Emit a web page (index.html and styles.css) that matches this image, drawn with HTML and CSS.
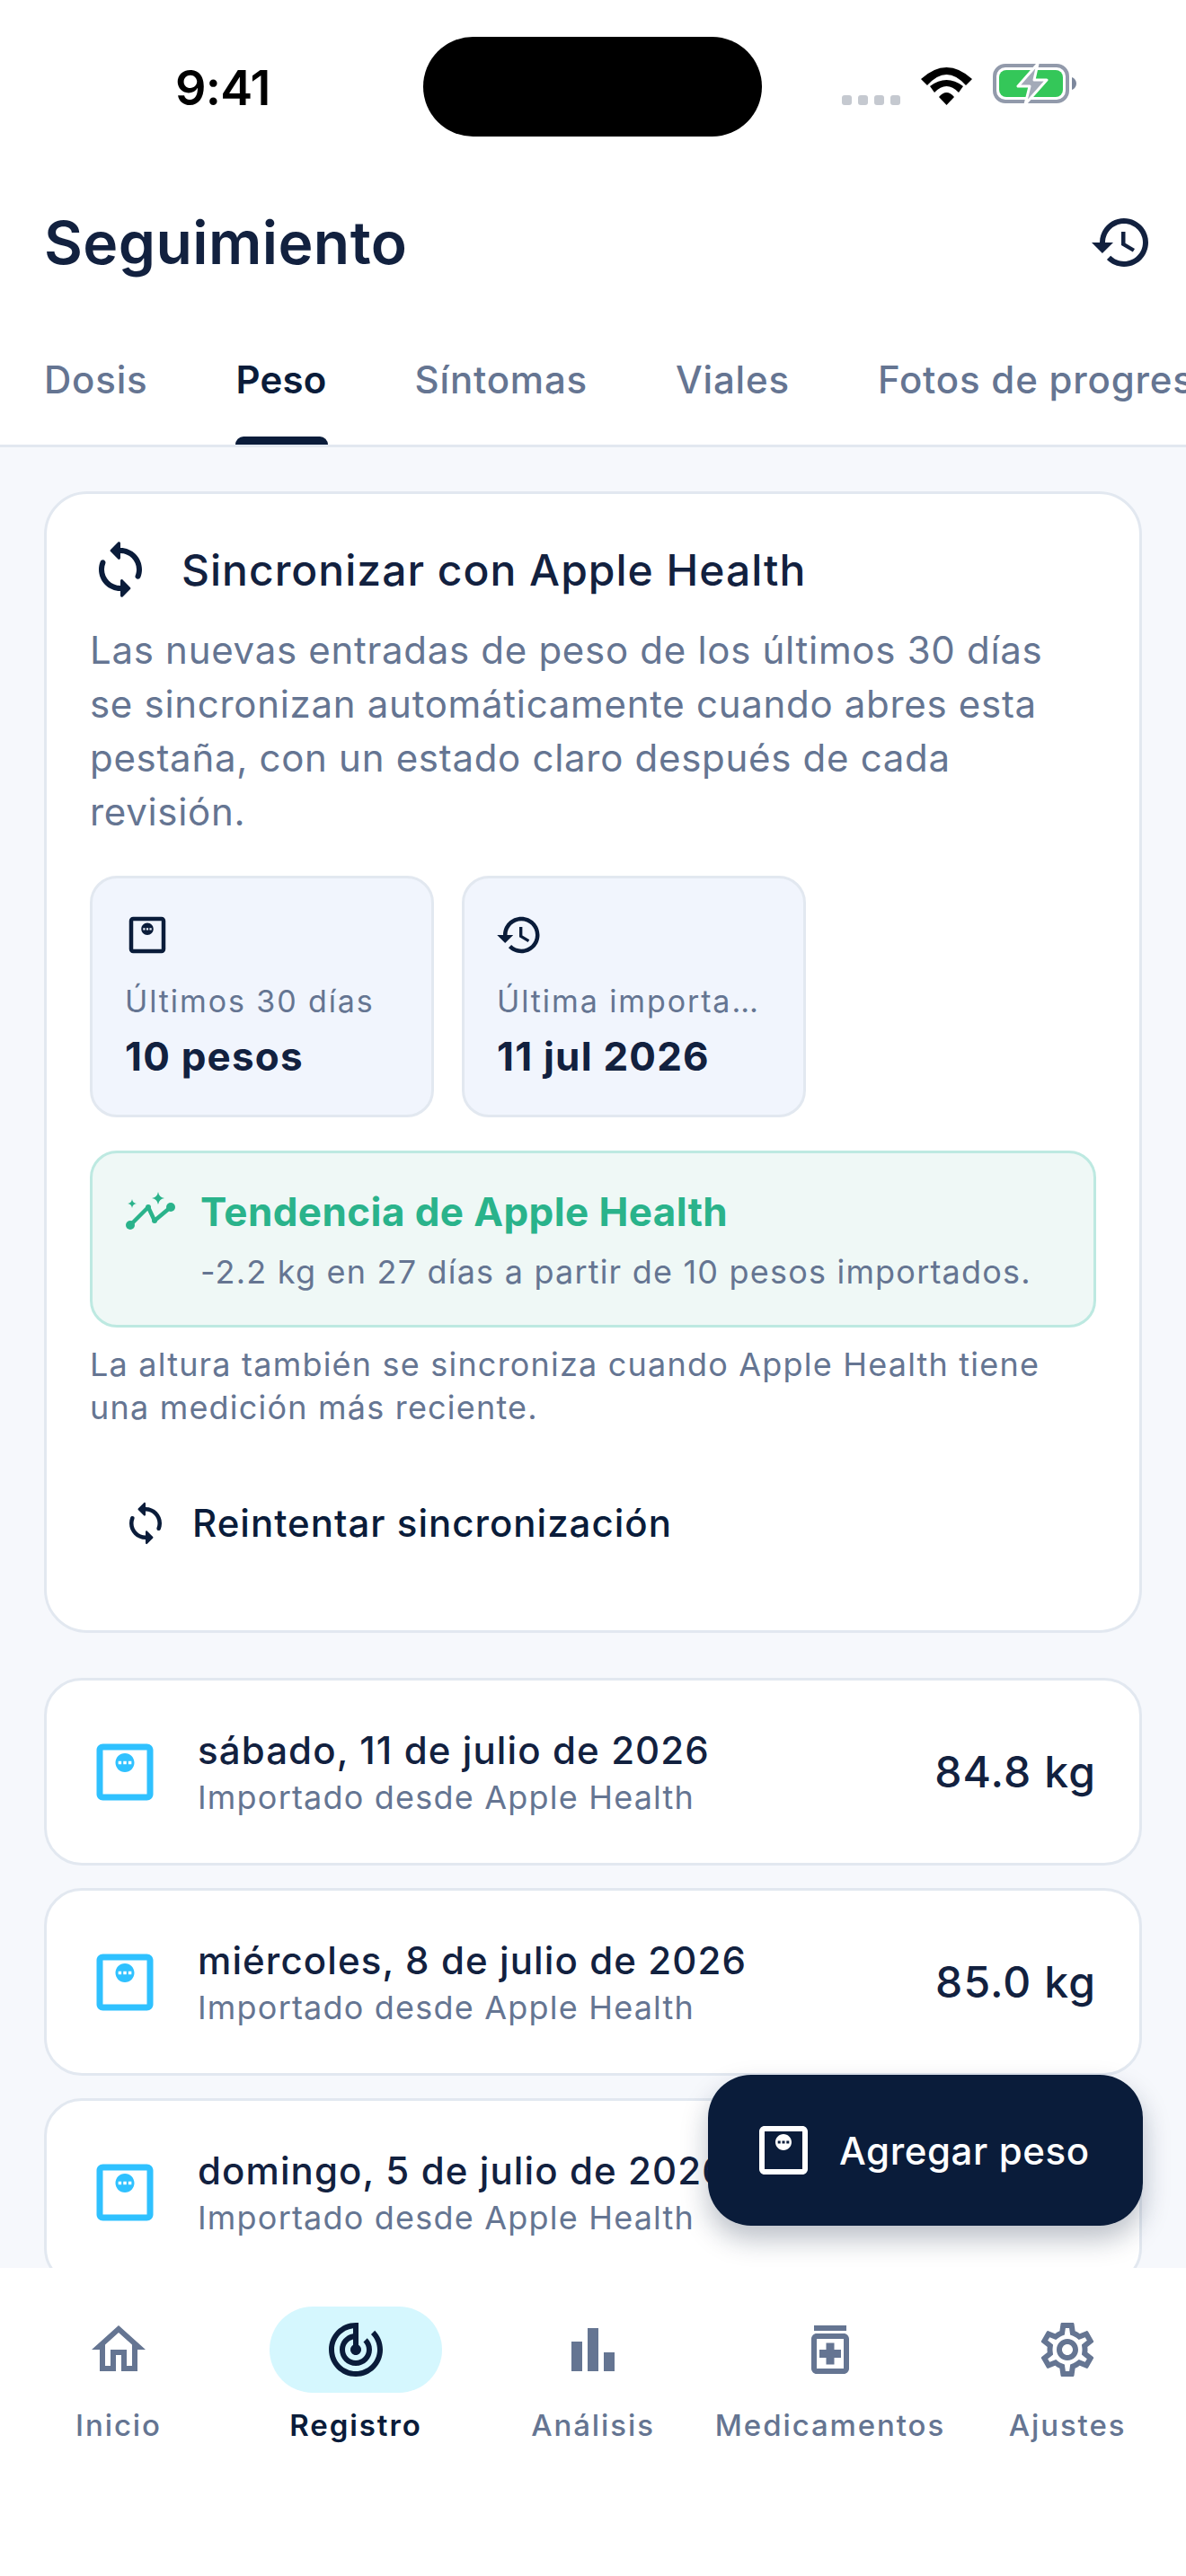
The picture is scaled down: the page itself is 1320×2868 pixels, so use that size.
FILE: index.html
```html
<!DOCTYPE html>
<html lang="es">
<head>
    <meta charset="UTF-8">
    <meta name="viewport" content="width=device-width, initial-scale=1.0">
    <title>Seguimiento</title>
    <link rel="stylesheet" href="styles.css">
</head>
<body>
    <svg class="defs" width="0" height="0">
        <symbol id="i-history" viewBox="0 0 24 24"><path d="M13 3c-4.97 0-9 4.03-9 9H1l3.89 3.89.07.14L9 12H6c0-3.87 3.13-7 7-7s7 3.13 7 7-3.13 7-7 7c-1.93 0-3.68-.79-4.94-2.06l-1.42 1.42C8.27 19.99 10.51 21 13 21c4.97 0 9-4.03 9-9s-4.03-9-9-9zm-1 5v5l4.28 2.54.72-1.21-3.5-2.08V8H12z"/></symbol>
        <symbol id="i-sync" viewBox="0 0 24 24"><path d="M12 4V2.21c0-.45-.54-.67-.85-.35l-2.8 2.79c-.2.2-.2.51 0 .71l2.79 2.79c.32.31.86.09.86-.36V6c3.31 0 6 2.69 6 6 0 .79-.15 1.56-.44 2.25-.15.36-.04.77.23 1.04.51.51 1.37.33 1.64-.34.37-.91.57-1.91.57-2.95 0-4.42-3.58-8-8-8zm0 14c-3.31 0-6-2.69-6-6 0-.79.15-1.56.44-2.25.15-.36.04-.77-.23-1.04-.51-.51-1.37-.33-1.64.34C4.2 9.96 4 10.96 4 12c0 4.42 3.58 8 8 8v1.79c0 .45.54.67.85.35l2.79-2.79c.2-.2.2-.51 0-.71l-2.79-2.79c-.31-.31-.85-.09-.85.36V18z"/></symbol>
        <symbol id="i-weight" viewBox="0 0 24 24"><path fill-rule="evenodd" d="M5 3h14c1.100 0 2 .9 2 2v14c0 1.100-.9 2-2 2H5c-1.100 0-2-.9-2-2V5c0-1.100.9-2 2-2zm0 2v14h14V5H5zm7 1c1.660 0 3 1.340 3 3s-1.340 3-3 3-3-1.340-3-3 1.340-3 3-3zm-2.100 2.500v1h1v-1h-1zm1.600 0v1h1v-1h-1zm1.600 0v1h1v-1h-1z"/></symbol>
    </svg>

    <div class="screen">
        <div class="status">
            <span class="time">9:41</span>
            <span class="island"></span>
            <div class="status-icons">
                <div class="signal"><i></i><i></i><i></i><i></i></div>
                <svg width="57" height="42" viewBox="0 0 57 42">
                    <path d="M0 13Q28.5-13 57 13L50 20Q28.5-4 7 20Z"/>
                    <path d="M10 21Q28.5 7 47 21L42 28Q28.5 14 15 28Z"/>
                    <path d="M20 33Q28.5 23 37 33L28.5 42Z"/>
                </svg>
                <svg width="96" height="47" viewBox="0 0 96 47">
                    <rect x="2" y="3" width="81" height="40" rx="12" fill="none" stroke="#929aab" stroke-width="4"/>
                    <rect x="7" y="8" width="71" height="30" rx="8" fill="#34c759"/>
                    <path d="M88 16c3 1 5 4 5 7s-2 6-5 7z" fill="#7c879c"/>
                    <path d="M50 1L28 26H41L36 46L60 19H46Z" fill="#a3aab8" stroke="#fff" stroke-width="3" stroke-linejoin="round"/>
                </svg>
            </div>
        </div>

        <header class="header">
            <h1>Seguimiento</h1>
            <svg class="icon-72 navy"><use href="#i-history"/></svg>
        </header>

        <nav class="tabs">
            <span class="tab">Dosis</span>
            <span class="tab active">Peso</span>
            <span class="tab">Síntomas</span>
            <span class="tab">Viales</span>
            <span class="tab">Fotos de progreso</span>
        </nav>

        <main class="content">
            <section class="card">
                <div class="card-head">
                    <svg class="icon-72 dark"><use href="#i-sync"/></svg>
                    <h2>Sincronizar con Apple Health</h2>
                </div>
                <p class="card-text">Las nuevas entradas de peso de los últimos 30 días se sincronizan automáticamente cuando abres esta pestaña, con un estado claro después de cada revisión.</p>

                <div class="stats">
                    <div class="stat">
                        <svg class="icon-54 dark"><use href="#i-weight"/></svg>
                        <div class="stat-label">Últimos 30 días</div>
                        <div class="stat-value">10 pesos</div>
                    </div>
                    <div class="stat">
                        <svg class="icon-54 dark"><use href="#i-history"/></svg>
                        <div class="stat-label">Última importación</div>
                        <div class="stat-value">11 jul 2026</div>
                    </div>
                </div>

                <div class="trend">
                    <div class="trend-head">
                        <svg width="60" height="48" viewBox="0 0 60 48">
                            <path d="M7 39L27 19L34 34L52 19" fill="none" stroke="#2ab38b" stroke-width="4.5" stroke-linejoin="round"/>
                            <circle cx="7" cy="39" r="5" fill="#2ab38b"/>
                            <circle cx="52" cy="19" r="5" fill="#2ab38b"/>
                            <circle cx="27" cy="19" r="3" fill="#2ab38b"/>
                            <circle cx="34" cy="34" r="3" fill="#2ab38b"/>
                            <path d="M38 2Q39 8 45 9Q39 10 38 16Q37 10 31 9Q37 8 38 2Z" fill="#2ab38b"/>
                            <path d="M9 10Q9.6 14.4 14 15Q9.6 15.6 9 20Q8.4 15.6 4 15Q8.4 14.4 9 10Z" fill="#2ab38b"/>
                        </svg>
                        <h3>Tendencia de Apple Health</h3>
                    </div>
                    <p class="trend-text">-2.2 kg en 27 días a partir de 10 pesos importados.</p>
                </div>

                <p class="note">La altura también se sincroniza cuando Apple Health tiene una medición más reciente.</p>

                <div class="retry">
                    <svg class="icon-54 dark"><use href="#i-sync"/></svg>
                    <span>Reintentar sincronización</span>
                </div>
            </section>

            <div class="entries">
                <div class="entry">
                    <svg class="icon-84 sky"><use href="#i-weight"/></svg>
                    <div class="entry-info">
                        <div class="entry-date">sábado, 11 de julio de 2026</div>
                        <div class="entry-source">Importado desde Apple Health</div>
                    </div>
                    <div class="entry-kg">84.8 kg</div>
                </div>
                <div class="entry">
                    <svg class="icon-84 sky"><use href="#i-weight"/></svg>
                    <div class="entry-info">
                        <div class="entry-date">miércoles, 8 de julio de 2026</div>
                        <div class="entry-source">Importado desde Apple Health</div>
                    </div>
                    <div class="entry-kg">85.0 kg</div>
                </div>
                <div class="entry">
                    <svg class="icon-84 sky"><use href="#i-weight"/></svg>
                    <div class="entry-info">
                        <div class="entry-date">domingo, 5 de julio de 2026</div>
                        <div class="entry-source">Importado desde Apple Health</div>
                    </div>
                </div>
            </div>
        </main>

        <button class="fab">
            <svg class="icon-72"><use href="#i-weight"/></svg>
            <span>Agregar peso</span>
        </button>

        <nav class="bottom-nav">
            <div class="nav-item">
                <div class="nav-icon">
                    <svg class="icon-72" viewBox="0 0 24 24"><path d="M12 5.69l5 4.5V18h-2v-6H9v6H7v-7.81l5-4.5M12 3L2 12h3v8h6v-6h2v6h6v-8h3L12 3z"/></svg>
                </div>
                <span>Inicio</span>
            </div>
            <div class="nav-item active">
                <div class="nav-icon">
                    <svg class="icon-72" viewBox="0 0 24 24"><path d="M19.07 4.93l-1.41 1.41C19.1 7.79 20 9.79 20 12c0 4.42-3.58 8-8 8s-8-3.58-8-8c0-4.08 3.05-7.44 7-7.93v2.02C8.16 6.57 6 9.03 6 12c0 3.31 2.69 6 6 6s6-2.69 6-6c0-1.66-.67-3.16-1.76-4.24l-1.41 1.41C15.55 9.9 16 10.9 16 12c0 2.21-1.79 4-4 4s-4-1.79-4-4c0-1.86 1.28-3.41 3-3.86v2.14c-.6.35-1 .98-1 1.72 0 1.1.9 2 2 2s2-.9 2-2c0-.74-.4-1.38-1-1.72V2h-1C6.48 2 2 6.48 2 12s4.48 10 10 10 10-4.48 10-10c0-2.76-1.12-5.26-2.93-7.07z"/></svg>
                </div>
                <span>Registro</span>
            </div>
            <div class="nav-item">
                <div class="nav-icon">
                    <svg class="icon-72" viewBox="0 0 24 24"><path d="M4 9h4v11H4zm12 4h4v7h-4zm-6-9h4v16h-4z"/></svg>
                </div>
                <span>Análisis</span>
            </div>
            <div class="nav-item">
                <div class="nav-icon">
                    <svg class="icon-72" viewBox="0 0 24 24"><path fill-rule="evenodd" d="M18 3H6v2h12V3zM17 6H7c-1.1 0-2 .9-2 2v11c0 1.1.9 2 2 2h10c1.1 0 2-.9 2-2V8c0-1.1-.9-2-2-2zm0 13H7V8h10v11zM10.500 17.500h3V15H16v-3h-2.500V9.500h-3V12H8v3h2.500v2.500z"/></svg>
                </div>
                <span>Medicamentos</span>
            </div>
            <div class="nav-item">
                <div class="nav-icon">
                    <svg class="icon-72" viewBox="0 0 24 24"><path d="M19.43 12.98c.04-.32.07-.64.07-.98 0-.34-.03-.66-.07-.98l2.11-1.65c.19-.15.24-.42.12-.64l-2-3.46c-.09-.16-.26-.25-.44-.25-.06 0-.12.01-.17.03l-2.49 1c-.52-.4-1.08-.73-1.69-.98l-.38-2.65C14.46 2.18 14.25 2 14 2h-4c-.25 0-.46.18-.49.42l-.38 2.65c-.61.25-1.17.59-1.69.98l-2.49-1c-.06-.02-.12-.03-.18-.03-.17 0-.34.09-.43.25l-2 3.46c-.13.22-.07.49.12.64l2.11 1.65c-.04.32-.07.65-.07.98 0 .33.03.66.07.98l-2.11 1.65c-.19.15-.24.42-.12.64l2 3.46c.09.16.26.25.44.25.06 0 .12-.01.17-.03l2.49-1c.52.4 1.08.73 1.69.98l.38 2.65c.03.24.24.42.49.42h4c.25 0 .46-.18.49-.42l.38-2.65c.61-.25 1.17-.59 1.69-.98l2.49 1c.06.02.12.03.18.03.17 0 .34-.09.43-.25l2-3.46c.12-.22.07-.49-.12-.64l-2.11-1.65zm-1.98-1.71c.04.31.05.52.05.73 0 .21-.02.43-.05.73l-.14 1.13.89.7 1.08.84-.7 1.21-1.27-.51-1.04-.42-.9.68c-.43.32-.84.56-1.25.73l-1.06.43-.16 1.13-.2 1.35h-1.4l-.19-1.35-.16-1.13-1.06-.43c-.43-.18-.83-.41-1.23-.71l-.91-.7-1.06.43-1.27.51-.7-1.21 1.08-.84.89-.7-.14-1.13c-.03-.31-.05-.54-.05-.74s.02-.43.05-.73l.14-1.13-.89-.7-1.08-.84.7-1.21 1.27.51 1.04.42.9-.68c.43-.32.84-.56 1.25-.73l1.06-.43.16-1.13.2-1.35h1.39l.19 1.35.16 1.13 1.06.43c.43.18.83.41 1.23.71l.91.7 1.06-.43 1.27-.51.7 1.21-1.07.85-.89.7.14 1.13zM12 8c-2.21 0-4 1.79-4 4s1.79 4 4 4 4-1.79 4-4-1.79-4-4-4zm0 6c-1.1 0-2-.9-2-2s.9-2 2-2 2 .9 2 2-.9 2-2 2z"/></svg>
                </div>
                <span>Ajustes</span>
            </div>
        </nav>
    </div>
</body>
</html>
```

FILE: styles.css
```css
* {
    box-sizing: border-box;
}
body {
    margin: 0;
    font-family: Inter, "Noto Sans", sans-serif;
    color: #12213f;
}
h1, h2, h3, p {
    margin: 0;
}
svg {
    flex-shrink: 0;
    fill: currentColor;
}
.defs {
    position: absolute;
}
.icon-54 { width: 54px; height: 54px; }
.icon-72 { width: 72px; height: 72px; }
.icon-84 { width: 84px; height: 84px; }
.navy { color: #12213f; }
.dark { color: #0a1c3a; }
.sky { color: #2fc1ff; }

.screen {
    position: relative;
    width: 1320px;
    height: 2868px;
    display: flex;
    flex-direction: column;
    overflow: hidden;
    background: #fff;
}

/* status bar */
.status {
    display: flex;
    height: 190px;
    flex-shrink: 0;
    padding: 41px 0 0 195px;
}
.time {
    width: 276px;
    margin-top: 30px;
    font-size: 54px;
    line-height: 54px;
    font-weight: 600;
    letter-spacing: -0.8px;
    color: #000;
}
.island {
    width: 377px;
    height: 111px;
    border-radius: 56px;
    background: #000;
}
.status-icons {
    display: flex;
    align-items: flex-end;
    gap: 23px;
    height: 76px;
    margin-left: 89px;
    color: #000;
}
.signal {
    display: flex;
    gap: 7px;
}
.signal i {
    width: 11px;
    height: 11px;
    border-radius: 3px;
    background: #c5c9d0;
}

/* title and tabs */
.header {
    display: flex;
    align-items: center;
    justify-content: space-between;
    height: 160px;
    flex-shrink: 0;
    padding: 0 36px 0 49px;
}
.header h1 {
    font-size: 66px;
    font-weight: 600;
    letter-spacing: 0.4px;
}
.tabs {
    display: flex;
    gap: 98px;
    height: 148px;
    flex-shrink: 0;
    padding: 48px 0 0 49px;
    border-bottom: 3px solid #e2e8f0;
    overflow: hidden;
    white-space: nowrap;
}
.tab {
    position: relative;
    flex-shrink: 0;
    height: 97px;
    font-size: 42px;
    line-height: 50px;
    font-weight: 500;
    letter-spacing: 0.8px;
    color: #657592;
}
.tab.active {
    font-weight: 600;
    letter-spacing: 0.2px;
    color: #0a1c3a;
}
.tab.active::after {
    content: "";
    position: absolute;
    left: -1px;
    right: -1px;
    bottom: 0;
    height: 9px;
    border-radius: 9px 9px 0 0;
    background: #0a1c3a;
}

/* scroll area */
.content {
    flex: 1;
    min-height: 0;
    display: flex;
    flex-direction: column;
    gap: 50px;
    padding: 49px 49px 0;
    overflow: hidden;
    background: #f6f8fc;
}
.card {
    flex-shrink: 0;
    padding: 48px 48px 0;
    border: 3px solid #e2e8f0;
    border-radius: 48px;
    background: #fff;
}
.card-head {
    display: flex;
    align-items: center;
    gap: 32px;
    margin-left: -2px;
}
.card-head h2 {
    font-size: 48px;
    font-weight: 500;
    letter-spacing: 1px;
}
.card-text {
    margin-top: 24px;
    font-size: 42px;
    line-height: 60px;
    letter-spacing: 0.7px;
    color: #657592;
}
.stats {
    display: flex;
    gap: 31px;
    margin-top: 41px;
}
.stat {
    width: 383px;
    height: 269px;
    padding: 36px 36px 0;
    border: 3px solid #e2e8f0;
    border-radius: 30px;
    background: #f1f5fd;
}
.stat svg {
    display: block;
    margin-left: -2px;
}
.stat-label {
    margin-top: 23px;
    font-size: 34px;
    line-height: 48px;
    letter-spacing: 1.9px;
    color: #657592;
    white-space: nowrap;
    overflow: hidden;
    text-overflow: ellipsis;
}
.stat-value {
    margin-top: 10px;
    font-size: 44px;
    line-height: 54px;
    font-weight: 700;
    letter-spacing: 1.2px;
}
.trend {
    height: 197px;
    margin-top: 37px;
    padding: 41px 35px 0;
    border: 3px solid #bde9e1;
    border-radius: 30px;
    background: #eff8f6;
}
.trend-head {
    display: flex;
    align-items: center;
    gap: 25px;
}
.trend-head h3 {
    font-size: 44px;
    line-height: 48px;
    font-weight: 700;
    letter-spacing: 0.4px;
    color: #2ab38b;
}
.trend-text {
    margin: 19px 0 0 85px;
    font-size: 36px;
    line-height: 48px;
    letter-spacing: 1.2px;
    color: #657592;
}
.note {
    margin-top: 17px;
    font-size: 36px;
    line-height: 48px;
    letter-spacing: 1.2px;
    color: #657592;
}
.retry {
    display: flex;
    align-items: center;
    gap: 25px;
    margin-top: 37px;
    padding: 40px 35px 91px;
    font-size: 42px;
    line-height: 56px;
    font-weight: 500;
    letter-spacing: 1px;
    color: #0a1c3a;
}

/* weight list */
.entries {
    display: flex;
    flex-direction: column;
    gap: 25px;
    flex-shrink: 0;
}
.entry {
    display: flex;
    align-items: center;
    gap: 39px;
    height: 209px;
    padding: 0 48px;
    border: 3px solid #e2e8f0;
    border-radius: 42px;
    background: #fff;
}
.entry svg {
    margin-left: -3px;
}
.entry-info {
    flex: 1;
    min-width: 0;
    margin-top: 3px;
}
.entry-date {
    font-size: 42px;
    line-height: 50px;
    font-weight: 500;
    letter-spacing: 1.1px;
}
.entry-source {
    margin-top: 4px;
    font-size: 36px;
    line-height: 46px;
    letter-spacing: 1.2px;
    color: #657592;
}
.entry-kg {
    font-size: 48px;
    font-weight: 500;
    letter-spacing: 1.1px;
}

/* floating button */
.fab {
    position: absolute;
    right: 48px;
    bottom: 390px;
    display: flex;
    align-items: center;
    gap: 26px;
    width: 484px;
    height: 168px;
    padding: 0 48px;
    border: none;
    border-radius: 48px;
    background: #0a1c3a;
    color: #fff;
    font-family: inherit;
    font-size: 42px;
    font-weight: 500;
    letter-spacing: 0.6px;
    box-shadow: 0 15px 30px rgba(10, 28, 58, 0.28);
}

/* bottom nav */
.bottom-nav {
    display: flex;
    height: 343px;
    flex-shrink: 0;
    padding-top: 43px;
    background: #fff;
}
.nav-item {
    flex: 1;
    display: flex;
    flex-direction: column;
    align-items: center;
    font-size: 33px;
    line-height: 42px;
    font-weight: 500;
    letter-spacing: 1.9px;
    color: #657592;
    white-space: nowrap;
}
.nav-icon {
    display: flex;
    align-items: center;
    justify-content: center;
    width: 192px;
    height: 96px;
    margin-bottom: 15px;
    border-radius: 48px;
}
.nav-item.active {
    color: #0a1c3a;
    font-weight: 600;
}
.nav-item.active .nav-icon {
    background: #d5f7fe;
}
```
